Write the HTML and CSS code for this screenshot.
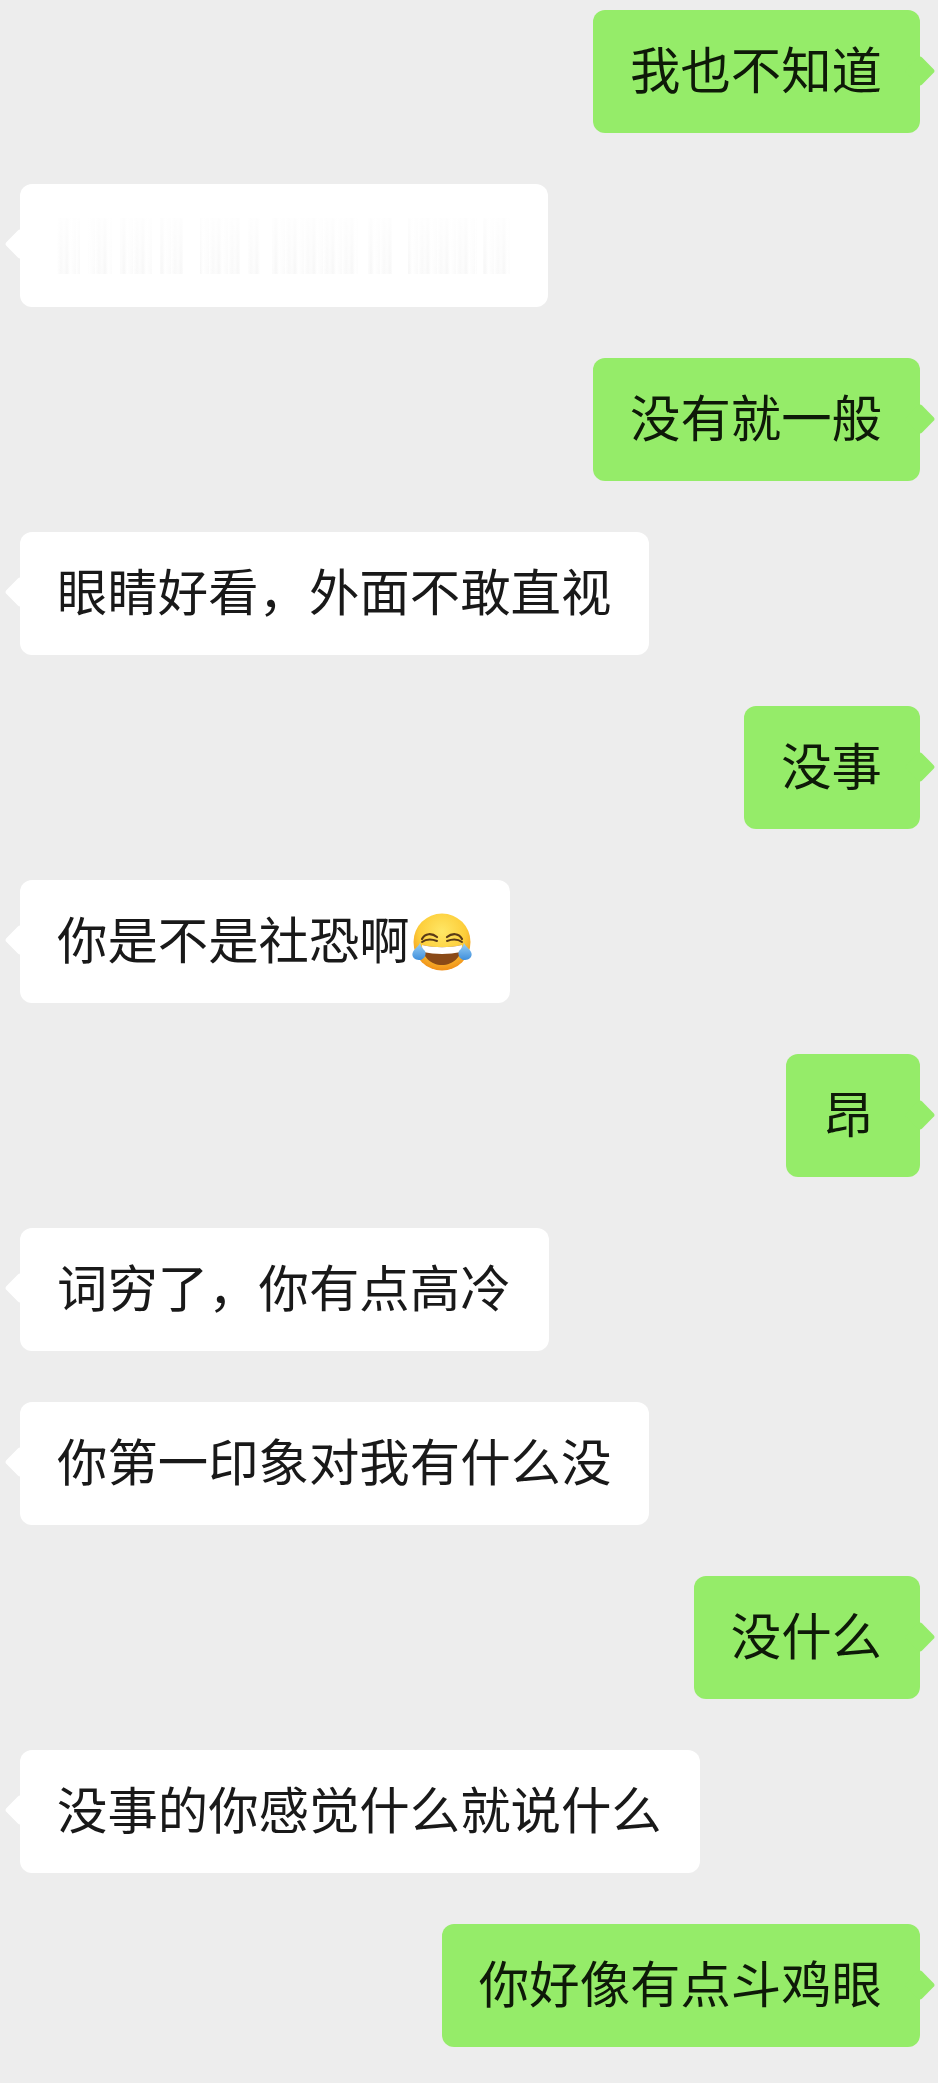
FILE: index.html
```html
<!DOCTYPE html>
<html lang="zh-CN">
<head>
    <meta charset="UTF-8">
    <meta name="viewport" content="width=device-width, initial-scale=1.0">
    <title>聊天记录</title>
    <link rel="stylesheet" href="styles.css">
</head>
<body>
    <section class="chat">
        <div class="msg me"><p class="bubble">我也不知道</p></div>
        <div class="msg other"><p class="bubble blurred"><span class="smear"></span></p></div>
        <div class="msg me"><p class="bubble">没有就一般</p></div>
        <div class="msg other"><p class="bubble">眼睛好看，外面不敢直视</p></div>
        <div class="msg me"><p class="bubble">没事</p></div>
        <div class="msg other">
            <p class="bubble">你是不是社恐啊<svg class="emoji" viewBox="0 0 60 58" aria-label="笑哭">
                <defs>
                    <radialGradient id="face" cx="50%" cy="32%" r="68%">
                        <stop offset="0" stop-color="#ffe766"/>
                        <stop offset="0.6" stop-color="#fdce3a"/>
                        <stop offset="1" stop-color="#f08f18"/>
                    </radialGradient>
                    <linearGradient id="tear" x1="0" y1="0" x2="0" y2="1">
                        <stop offset="0" stop-color="#9ad0f5"/>
                        <stop offset="1" stop-color="#3f8fdc"/>
                    </linearGradient>
                </defs>
                <circle cx="30" cy="29" r="28.5" fill="url(#face)"/>
                <path d="M10 26C13 20 20 20 25 24" fill="none" stroke="#5a3a16" stroke-width="2.2" stroke-linecap="round"/>
                <path d="M10 29C14 26 20 26 25 28" fill="none" stroke="#5a3a16" stroke-width="2" stroke-linecap="round"/>
                <path d="M35 24C40 20 47 20 50 26" fill="none" stroke="#5a3a16" stroke-width="2.2" stroke-linecap="round"/>
                <path d="M35 28C40 26 46 26 50 29" fill="none" stroke="#5a3a16" stroke-width="2" stroke-linecap="round"/>
                <path d="M10 32C23 35 37 35 50 32C50 44 41 52 30 52C19 52 10 44 10 32Z" fill="#8a4a17"/>
                <path d="M10 32C23 35 37 35 50 32C50 35 49.6 37 49 39C37 41.5 23 41.5 11 39C10.4 37 10 35 10 32Z" fill="#fff"/>
                <path d="M8 30C9 34 11 36 13 38C15 43 11 47 7 47C2 47 -1 43 1 39C2 36 6 34 8 30Z" fill="url(#tear)"/>
                <path d="M52 30C51 34 49 36 47 38C45 43 49 47 53 47C58 47 61 43 59 39C58 36 54 34 52 30Z" fill="url(#tear)"/>
            </svg></p>
        </div>
        <div class="msg me"><p class="bubble single">昂</p></div>
        <div class="msg other"><p class="bubble">词穷了，你有点高冷</p></div>
        <div class="msg other"><p class="bubble">你第一印象对我有什么没</p></div>
        <div class="msg me"><p class="bubble">没什么</p></div>
        <div class="msg other"><p class="bubble">没事的你感觉什么就说什么</p></div>
        <div class="msg me"><p class="bubble">你好像有点斗鸡眼</p></div>
    </section>
</body>
</html>
```

FILE: styles.css
```css
*{
    margin: 0px;
    padding: 0px;
    box-sizing: border-box;
}
body{
    background-color: #ededed;
    font-family: "Noto Sans CJK SC", sans-serif;
}
.chat{
    display: flex;
    flex-direction: column;
    gap: 51px;
    padding: 10px 18px 20px 20px;
}
.msg{
    display: flex;
}
.msg.me{
    justify-content: flex-end;
}
.bubble{
    position: relative;
    display: flex;
    align-items: center;
    height: 123px;
    padding: 0px 38px 7px 37px;
    border-radius: 12px;
    font-size: 50.4px;
    line-height: 1;
    color: #191919;
    background-color: #ffffff;
    white-space: nowrap;
}
.me .bubble{
    background-color: #95ec69;
    color: #0e1a08;
}
.single{
    min-width: 134px;
}
/* tail, a turned square sticking out of the side */
.bubble::before{
    content: "";
    position: absolute;
    top: 50%;
    width: 22px;
    height: 22px;
    margin-top: -12px;
    border-radius: 3px;
    background-color: inherit;
    transform: rotate(45deg);
}
.other .bubble::before{
    left: -11px;
    margin-top: -13px;
}
.me .bubble::before{
    right: -11px;
}
.blurred{
    width: 528px;
}
/* the hidden message: faint streaks, stronger near the bottom */
.smear{
    display: block;
    width: 453px;
    height: 56px;
    margin-bottom: -7px;
    background-color: #ffffff;
    background-image:
        linear-gradient(180deg, rgba(255,255,255,0.8), rgba(255,255,255,0.1) 95%),
        linear-gradient(90deg,
            transparent 23px, #fff 23px, #fff 31px, transparent 31px,
            transparent 55px, #fff 55px, #fff 63px, transparent 63px,
            transparent 95px, #fff 95px, #fff 103px, transparent 103px,
            transparent 126px, #fff 126px, #fff 143px, transparent 143px,
            transparent 183px, #fff 183px, #fff 191px, transparent 191px,
            transparent 203px, #fff 203px, #fff 215px, transparent 215px,
            transparent 301px, #fff 301px, #fff 311px, transparent 311px,
            transparent 335px, #fff 335px, #fff 351px, transparent 351px,
            transparent 420px, #fff 420px, #fff 426px, transparent 426px),
        repeating-linear-gradient(90deg, #fff 0px, #f8f8f8 4px, #fcfcfc 7px, #f6f6f6 10px, #fff 13px, #fafafa 19px);
}
.emoji{
    flex: none;
    width: 60px;
    height: 58px;
    margin-left: 2px;
    margin-bottom: -7px;
}
```
